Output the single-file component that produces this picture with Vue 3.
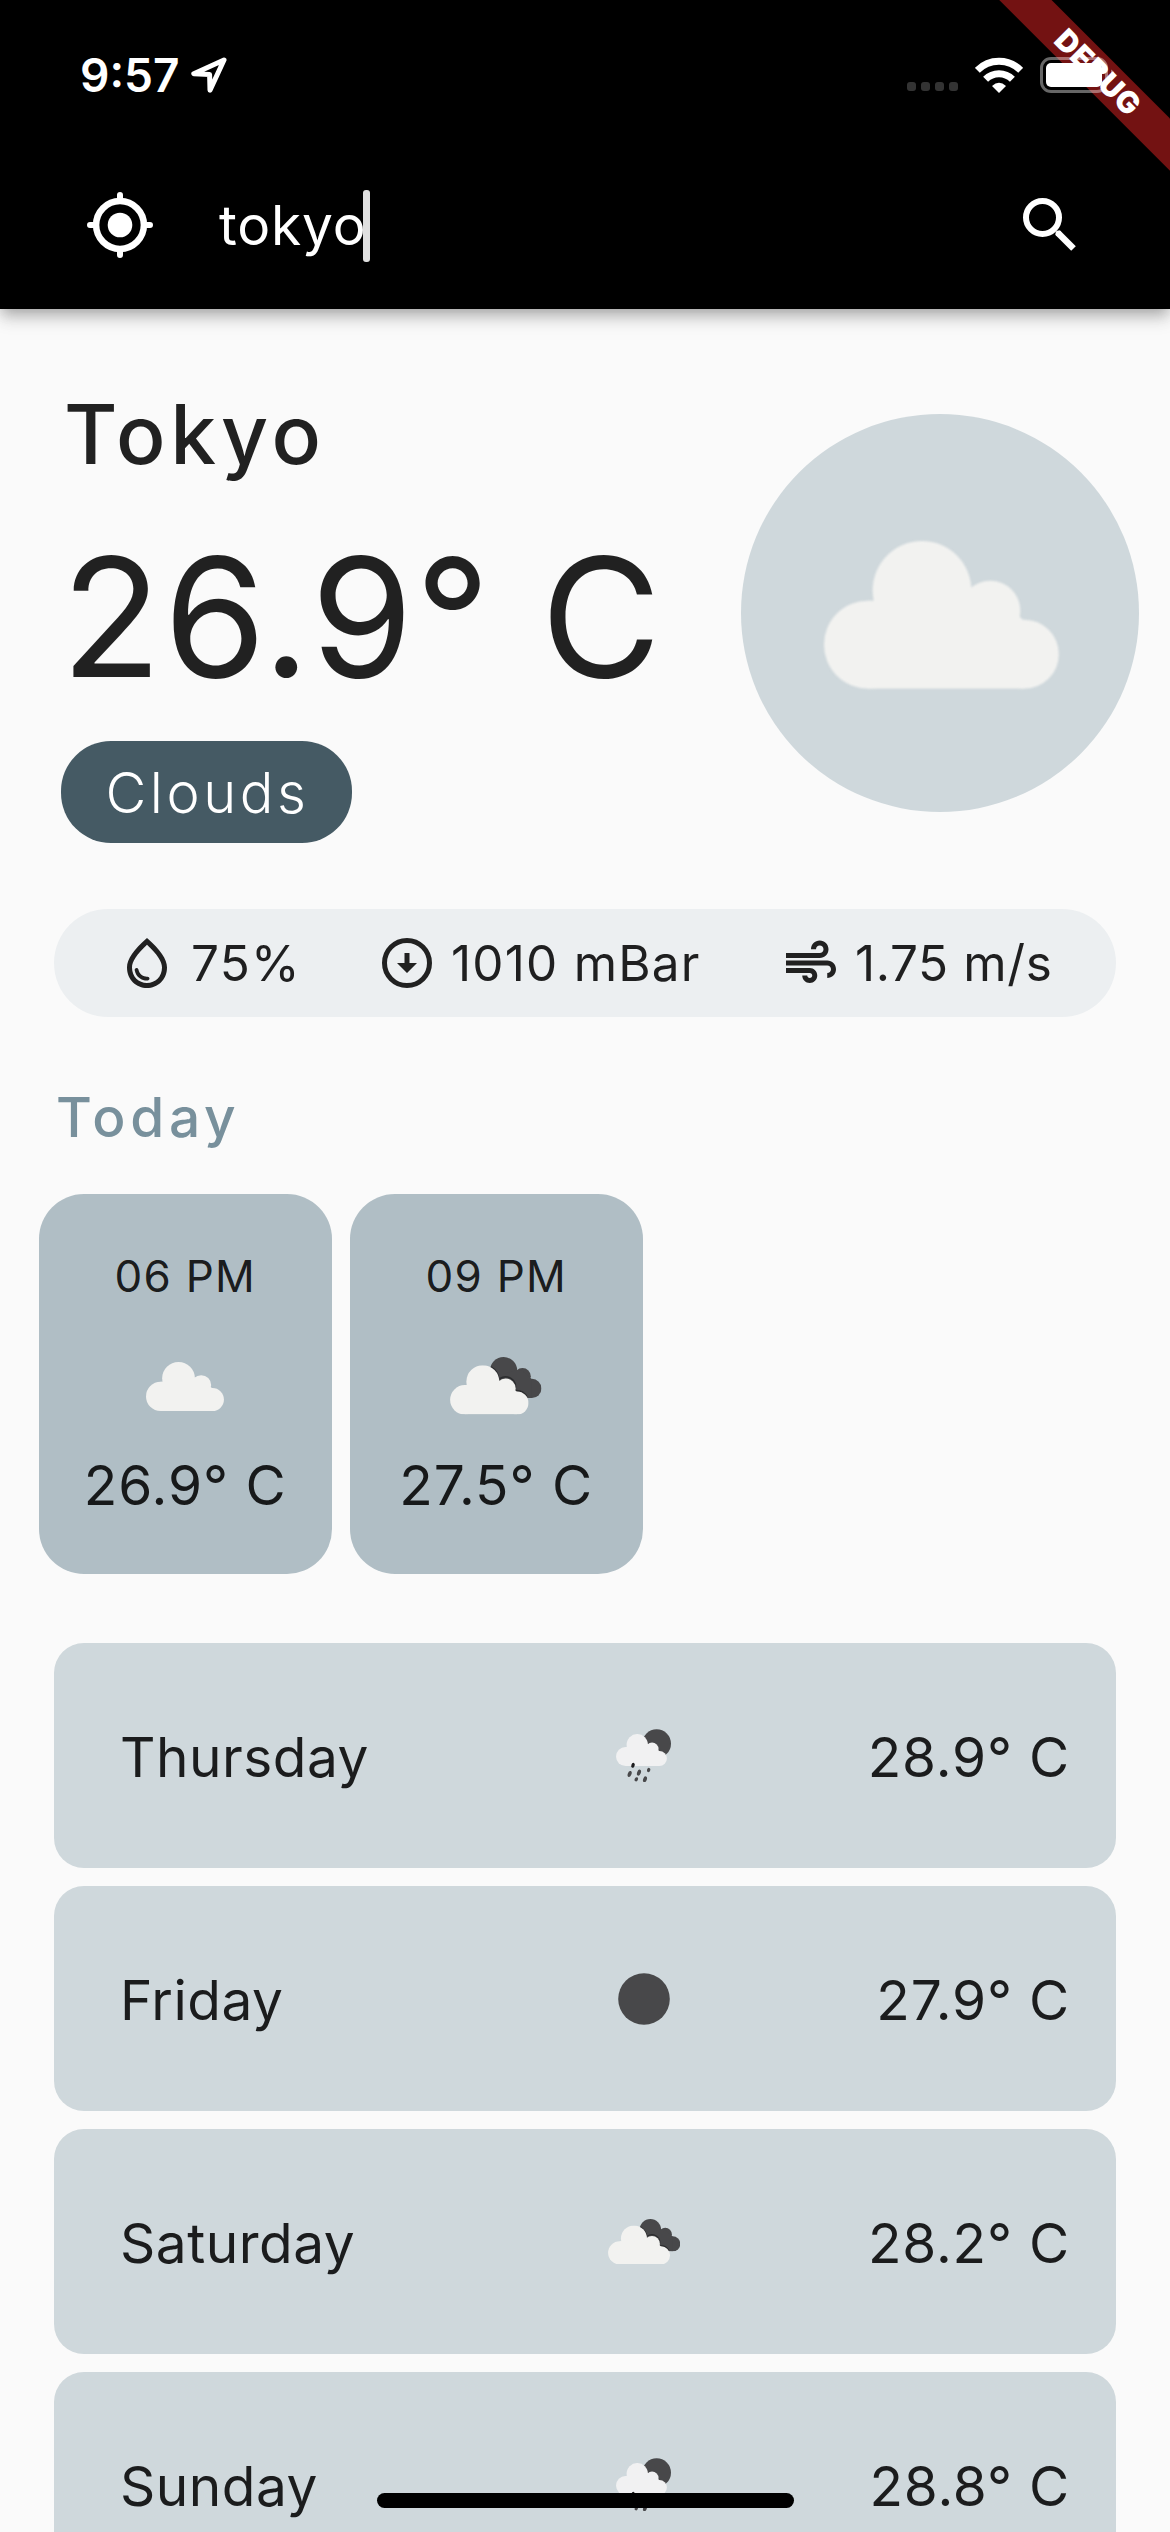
<script setup>
const hours = [
  { time: '06 PM', temp: '26.9° C', icon: 'cloud', w: 78, h: 49 },
  { time: '09 PM', temp: '27.5° C', icon: 'clouds', w: 92, h: 57.5 },
]

const days = [
  { name: 'Thursday', temp: '28.9° C', icon: 'rain', w: 55.3, h: 53.3 },
  { name: 'Friday', temp: '27.9° C', icon: 'clear', w: 52, h: 52 },
  { name: 'Saturday', temp: '28.2° C', icon: 'clouds', w: 72.7, h: 45.5 },
  { name: 'Sunday', temp: '28.8° C', icon: 'rain', w: 55.3, h: 53.3 },
]
</script>

<template>
  <div class="screen">
    <svg class="sprite" aria-hidden="true">
      <symbol id="cloud" viewBox="0 0 705 443">
        <circle cx="132" cy="311" r="132" />
        <circle cx="294" cy="148" r="148" />
        <circle cx="499" cy="209" r="90" />
        <circle cx="601" cy="339.500" r="103.500" />
        <path d="M132 179H300L440 140L499 150L601 240V443H132Z" />
      </symbol>
      <symbol id="clouds" viewBox="0 0 92 57.5">
        <use href="#cloud" x="26.500" y="0" width="65" height="41" fill="#48484a" />
        <g fill="none" stroke="#2b2c2e" stroke-width="1.500">
          <path d="M41 10A16.400 16.400 0 0 1 49 22.500" />
          <path d="M50 21.500A10 10 0 0 1 65.500 30.500" />
          <path d="M66 33.500A12 12 0 0 1 77 40" />
        </g>
        <use href="#cloud" x="0" y="8.200" width="78.700" height="49.300" fill="#f2f2f0" />
      </symbol>
      <symbol id="rain" viewBox="78 56 166 160">
        <circle cx="200" cy="100" r="43" fill="#48484a" />
        <use href="#cloud" x="78" y="71" width="153" height="96" fill="#f1f1f2" />
        <g fill="#48484a">
          <ellipse cx="129" cy="165" rx="5" ry="7.500" fill="#1c1c1e" transform="rotate(20 129 165)" />
          <ellipse cx="119" cy="191" rx="5.500" ry="9.500" transform="rotate(20 119 191)" />
          <ellipse cx="147" cy="187" rx="5.500" ry="9.500" transform="rotate(20 147 187)" />
          <ellipse cx="176" cy="179" rx="5" ry="6.500" transform="rotate(20 176 179)" />
          <ellipse cx="139" cy="207" rx="5" ry="6.500" transform="rotate(20 139 207)" />
          <ellipse cx="165" cy="207" rx="5.500" ry="9" transform="rotate(20 165 207)" />
        </g>
      </symbol>
      <symbol id="clear" viewBox="0 0 52 52">
        <circle cx="26" cy="26" r="25.800" fill="#48484a" />
      </symbol>
    </svg>

    <header class="header">
      <div class="status">
        <span class="clock">9:57</span>
        <svg class="nav-arrow" viewBox="0 0 36 36">
          <path d="M33 3 2.800 16.800 18.600 17.600 19 33.200Z" fill="none" stroke="#fff" stroke-width="5" stroke-linejoin="round" />
        </svg>
        <div class="signal"><i v-for="n in 4" :key="n"></i></div>
        <svg class="wifi" viewBox="0 0 48 36">
          <g fill="none" stroke="#fff" stroke-width="7">
            <path d="M2.300 13.300A30.500 30.500 0 0 1 45.700 13.300" />
            <path d="M10.600 22.300A19 19 0 0 1 37.400 22.300" />
          </g>
          <path d="M24 36 17 29Q24 22.500 31 29Z" fill="#fff" />
        </svg>
        <svg class="battery" viewBox="0 0 75 36">
          <rect x="1.500" y="1.500" width="65" height="33" rx="9.500" fill="none" stroke="#fff" stroke-opacity=".4" stroke-width="3" />
          <rect x="6" y="6" width="56" height="24" rx="5" fill="#fff" />
          <path d="M71 12.500Q74.500 14 74.500 18T71 23.500Z" fill="#fff" fill-opacity=".4" />
        </svg>
      </div>
      <div class="search">
        <svg class="locate" viewBox="0 0 66 66">
          <circle cx="33" cy="33" r="23.900" fill="none" stroke="#fff" stroke-width="6.500" />
          <circle cx="33" cy="33" r="12.300" fill="#fff" />
          <path d="M33 3V8M33 58V63M3 33H8M58 33H63" stroke="#fff" stroke-width="6" stroke-linecap="round" />
        </svg>
        <span class="query">tokyo</span>
        <i class="caret"></i>
        <svg class="magnifier" viewBox="0 0 72 72">
          <circle cx="28.500" cy="28.500" r="16.500" fill="none" stroke="#fff" stroke-width="6" />
          <path d="M43.500 43.500 59.500 59.500" stroke="#fff" stroke-width="6.500" />
          <circle cx="44.500" cy="44.500" r="3" fill="#fff" />
        </svg>
      </div>
    </header>

    <div class="debug"><span>DEBUG</span></div>

    <main>
      <section class="hero">
        <div class="now">
          <div class="city">Tokyo</div>
          <div class="degrees">26.9° C</div>
          <div class="chip">Clouds</div>
        </div>
        <div class="disc">
          <svg class="big-cloud"><use href="#cloud" width="235" height="147.700" fill="#f2f2f0" /></svg>
        </div>
      </section>

      <section class="stats">
        <div class="stat">
          <svg viewBox="0 0 24 24"><path d="M12 2c-5.330 4.550-8 8.480-8 11.800 0 4.980 3.800 8.200 8 8.200s8-3.220 8-8.200c0-3.320-2.670-7.250-8-11.800zm0 18c-3.350 0-6-2.570-6-6.200 0-2.340 1.950-5.440 6-9.140 4.050 3.700 6 6.790 6 9.140 0 3.630-2.650 6.200-6 6.200zm-4.170-6c.37 0 .67.26.74.62.41 2.220 2.280 2.980 3.640 2.870.43-.02.79.32.79.75 0 .4-.32.73-.72.75-2.130.13-4.620-1.090-5.190-4.120-.08-.45.28-.87.74-.87z" /></svg>
          <span>75%</span>
        </div>
        <div class="stat">
          <svg viewBox="0 0 24 24"><circle cx="12" cy="12" r="9" fill="none" stroke="#212121" stroke-width="2" /><path d="M11 8h2v4h3l-4 4-4-4h3z" /></svg>
          <span>1010 mBar</span>
        </div>
        <div class="stat wind">
          <svg viewBox="0 0 24 24"><path d="M14.500 17c0 1.650-1.350 3-3 3s-3-1.350-3-3h2c0 .55.45 1 1 1s1-.45 1-1-.45-1-1-1H2v-2h9.500c1.650 0 3 1.350 3 3zM19 6.500C19 4.570 17.430 3 15.500 3S12 4.570 12 6.500h2c0-.83.67-1.500 1.500-1.500s1.500.67 1.500 1.500S16.330 8 15.500 8H2v2h13.500c1.930 0 3.500-1.570 3.500-3.500zm-.5 4.500H2v2h16.500c.83 0 1.500.67 1.500 1.500s-.67 1.500-1.500 1.500v2c1.930 0 3.500-1.570 3.500-3.500S20.430 11 18.500 11z" /></svg>
          <span>1.75 m/s</span>
        </div>
      </section>

      <h2 class="today">Today</h2>
      <section class="hours">
        <article v-for="h in hours" :key="h.time" class="hour">
          <div class="time">{{ h.time }}</div>
          <div class="pic">
            <svg :width="h.w" :height="h.h" fill="#f2f2f0"><use :href="'#' + h.icon" :width="h.w" :height="h.h" /></svg>
          </div>
          <div class="temp">{{ h.temp }}</div>
        </article>
      </section>

      <section class="days">
        <article v-for="d in days" :key="d.name" class="day">
          <span class="name">{{ d.name }}</span>
          <span class="mark">
            <svg :width="d.w" :height="d.h"><use :href="'#' + d.icon" :width="d.w" :height="d.h" /></svg>
          </span>
          <span class="deg">{{ d.temp }}</span>
        </article>
      </section>
    </main>

    <div class="home-bar"></div>
  </div>
</template>

<style>
body { background: #fafafa; }
</style>

<style scoped>
.screen {
  position: relative;
  width: 1170px;
  height: 2532px;
  overflow: hidden;
  background: #fafafa;
  color: rgba(0, 0, 0, .87);
  font-family: Inter, "Liberation Sans", sans-serif;
  white-space: nowrap;
}
svg { display: block; flex: none; }
.sprite { position: absolute; width: 0; height: 0; }

.header {
  height: 309px;
  background: #000;
  color: #fff;
  box-shadow: 0 6px 12px -3px rgba(0, 0, 0, .2), 0 12px 15px rgba(0, 0, 0, .1), 0 3px 20px rgba(0, 0, 0, .12);
}
.status {
  display: flex;
  align-items: center;
  height: 133px;
  padding: 8px 0 0 80px;
}
.clock { width: 111px; font-size: 46px; font-weight: 600; }
.nav-arrow { width: 36px; height: 36px; }
.signal { display: flex; gap: 5px; margin: 24px 0 0 680px; }
.signal i { width: 9px; height: 9px; border-radius: 3px; background: #333; }
.wifi { width: 48px; height: 36px; margin-left: 17px; }
.battery { position: relative; z-index: 3; width: 75px; height: 36px; margin-left: 17px; }
.search { display: flex; align-items: center; height: 168px; padding-left: 87px; }
.locate { width: 66px; height: 66px; }
.query { width: 144px; margin-left: 66px; font-size: 55px; line-height: 72px; letter-spacing: .800px; }
.caret { width: 7px; height: 72px; border-radius: 3px; background: #e0e0e0; margin-top: 2px; }
.magnifier { width: 72px; height: 72px; margin-left: 644px; }

.debug {
  position: absolute;
  z-index: 2;
  left: 948px;
  top: 53.700px;
  width: 300px;
  height: 36.600px;
  transform: rotate(45deg);
  background: #731212;
  color: #fff;
  font-size: 30px;
  font-weight: 900;
  line-height: 36px;
  letter-spacing: .600px;
  text-align: center;
}

.hero { display: flex; justify-content: space-between; height: 600px; }
.now { padding: 76px 0 0 61px; }
.city { padding-left: 3px; font-size: 82px; font-weight: 500; line-height: 100px; letter-spacing: 4.800px; }
.degrees { margin-top: 32px; font-size: 165px; line-height: 200px; letter-spacing: 2px; }
.chip {
  box-sizing: border-box;
  width: 291px;
  height: 102px;
  margin-top: 24px;
  padding-left: 2px;
  border-radius: 50px;
  background: #455a64;
  color: #fff;
  font-size: 56px;
  font-weight: 300;
  line-height: 104px;
  letter-spacing: 3.600px;
  text-align: center;
}
.disc { width: 398px; height: 398px; margin: 105px 31px 0 0; border-radius: 50%; background: #cfd8dc; }
.big-cloud { width: 236px; height: 149px; margin: 127px 0 0 83px; overflow: visible; filter: blur(1px); }

.stats {
  display: grid;
  grid-template-columns: 260px 404px auto;
  align-items: center;
  height: 108px;
  margin: 0 54px;
  padding-left: 63px;
  border-radius: 54px;
  background: #eceff1;
  font-size: 49.500px;
  letter-spacing: 1.200px;
}
.stat { display: flex; align-items: center; gap: 14px; }
.stat svg { width: 60px; height: 60px; fill: #212121; }
.wind { letter-spacing: .600px; }

.today { margin: 67px 0 44px 56px; color: #78909c; font-size: 55px; font-weight: 500; line-height: 66px; letter-spacing: 4.700px; }

.hours { display: flex; gap: 18.500px; padding-left: 39px; }
.hour {
  box-sizing: border-box;
  width: 292.500px;
  height: 380px;
  padding-top: 55px;
  border-radius: 45px;
  background: #b0bec5;
  text-align: center;
}
.time { font-size: 44px; line-height: 54px; letter-spacing: 1.200px; }
.pic { box-sizing: border-box; display: flex; align-items: center; justify-content: center; height: 149px; padding-top: 17px; }
.temp { font-size: 55px; line-height: 66px; letter-spacing: 1px; }

.days { display: flex; flex-direction: column; gap: 18px; margin: 69px 54px 0; }
.day {
  display: grid;
  grid-template-columns: 474px 100px 1fr;
  align-items: center;
  height: 225px;
  padding: 0 46px 0 66px;
  border-radius: 30px;
  background: #cfd8dc;
  font-size: 55px;
}
.name { padding-top: 2px; letter-spacing: .500px; }
.mark { display: flex; justify-content: center; }
.deg { padding-top: 2px; letter-spacing: .800px; text-align: right; }

.home-bar {
  position: absolute;
  z-index: 4;
  left: 377px;
  bottom: 24px;
  width: 417px;
  height: 15px;
  border-radius: 8px;
  background: #000;
}
</style>
